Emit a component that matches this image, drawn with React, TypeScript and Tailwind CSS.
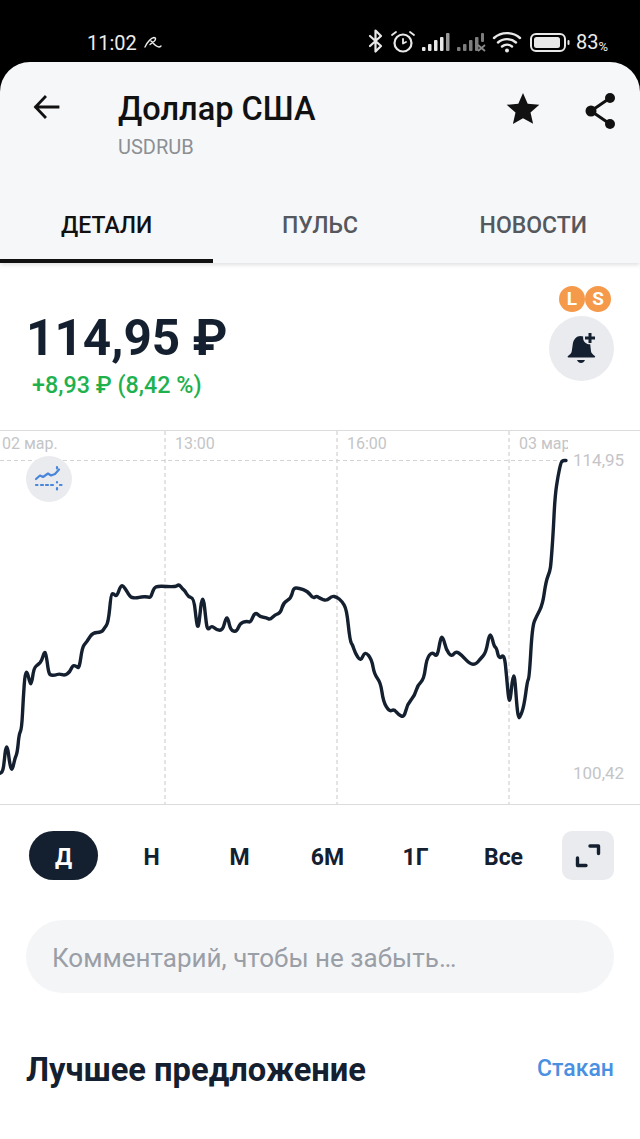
const z5: [number, number][] = [[0,607],[8,605],[13,570],[17,528],[23,528],[28,570],[33,595],[38,595],[45,560],[52,545],[57,490],[65,475],[70,380],[75,305],[82,303],[90,338],[95,338],[102,290],[115,280],[125,270],[133,242],[138,248],[145,300],[150,313],[165,313],[178,308],[195,314],[210,302],[218,283],[228,285],[238,293],[247,228],[258,215],[265,205],[278,185],[305,184],[313,172],[325,155],[333,70],[340,67],[350,78],[362,43],[370,45],[380,60],[392,80],[410,81],[425,77],[445,78],[452,80],[462,50],[475,45],[525,48],[537,40],[547,53],[555,60],[565,78],[582,82],[590,160],[595,170],[600,130],[605,85],[611,85],[616,130],[622,180],[635,163],[650,177],[668,178],[678,140],[684,142],[692,178],[710,183],[720,157],[740,150],[752,155],[765,122],[780,138],[800,140],[810,146],[825,132],[842,125],[850,95],[873,82],[880,52],[895,50],[925,62],[938,82],[950,75]];
const z6: [number, number][] = [[0,82],[20,90],[35,75],[50,78],[65,90],[80,115],[90,210],[98,222],[105,245],[122,272],[135,240],[155,265],[163,310],[182,335],[190,392],[208,422],[222,415],[235,430],[252,440],[262,400],[285,372],[293,342],[312,325],[320,262],[337,242],[352,260],[362,198],[370,200],[378,235],[395,258],[407,240],[425,252],[450,280],[468,280],[480,265],[498,245],[507,192],[514,192],[522,225],[530,232],[537,265],[553,248],[560,320],[566,388],[571,388],[578,315],[584,315],[590,400],[595,440],[600,440],[612,405],[622,330],[628,320],[637,165],[650,135],[668,100],[678,30],[690,0]];
const top: [number, number][] = [[551,562],[553,535],[555,495],[558,475],[561,461],[563,459.500],[566,459.500]];
const raw = [
  ...z5.map(([x, y]) => [x / 3, 570 + y / 3 - 430]),
  ...z6.map(([x, y]) => [320 + x / 3, 570 + y / 3 - 430]),
  ...top.map(([x, y]) => [x, y - 430]),
];
const f = (n: number) => n.toFixed(1);
let line = `M${f(raw[0][0])} ${f(raw[0][1])}`;
for (let i = 1; i < raw.length - 1; i++) {
  const mx = (raw[i][0] + raw[i + 1][0]) / 2;
  const my = (raw[i][1] + raw[i + 1][1]) / 2;
  line += ` Q${f(raw[i][0])} ${f(raw[i][1])} ${f(mx)} ${f(my)}`;
}
line += ` L${f(raw[raw.length - 1][0])} ${f(raw[raw.length - 1][1])}`;

function StatusBar() {
  return (
    <div className="h-[62px] bg-black flex items-end justify-between pl-[87px] pr-[32px] pb-[7px] text-[#ececec]">
      <div className="flex items-center gap-[7px]">
        <span className="text-[20px] leading-[24px]">11:02</span>
        <svg width="18" height="16" viewBox="0 0 18 16" fill="none" stroke="currentColor" strokeWidth="1.400" strokeLinecap="round" strokeLinejoin="round">
          <path d="M1 12C4 6 7 3 10 2.500c2 0 2 2 .5 3.500L6 9.500M7 6c3 3 5 6 8 6 1 0 2-1 2-1" />
        </svg>
      </div>
      <div className="flex items-center">
        <svg width="204" height="26" viewBox="0 0 204 26" fill="none">
          <g stroke="#e8e8e8" strokeWidth="2.200" strokeLinecap="round" strokeLinejoin="round">
            <path d="M4 7l11 10-5.500 5.500V1.500L15 7 4 17" />
            <circle cx="37" cy="14" r="8.500" />
            <path d="M37 10v4.500l3-1.500M26 6l4-3M48 6l-4-3" strokeWidth="1.800" />
          </g>
          <g fill="#e8e8e8">
            <rect x="56" y="18" width="3.500" height="4" rx="1" />
            <rect x="62" y="15" width="3.500" height="7" rx="1" />
            <rect x="68" y="11" width="3.500" height="11" rx="1" />
            <rect x="74" y="8" width="3.500" height="14" rx="1" />
          </g>
          <rect x="80" y="4" width="3.500" height="18" rx="1" fill="#9a9a9a" />
          <g fill="#7d7d7d">
            <rect x="91" y="18" width="3.500" height="4" rx="1" />
            <rect x="97" y="15" width="3.500" height="7" rx="1" />
            <rect x="103" y="11" width="3.500" height="11" rx="1" />
            <rect x="109" y="8" width="3.500" height="14" rx="1" />
            <rect x="115" y="4" width="3" height="9" rx="1" />
          </g>
          <path d="M112 16l7 6M119 16l-7 6" stroke="#8a8a8a" strokeWidth="1.800" />
          <path d="M128 9c7-6.500 19-6.500 26 0M132 13.500c5-4.500 13-4.500 18 0M136 17.500c3-2.500 7-2.500 10 0" stroke="#e8e8e8" strokeWidth="2.400" strokeLinecap="round" />
          <circle cx="141" cy="21.500" r="2" fill="#e8e8e8" />
          <rect x="165" y="5" width="34" height="17" rx="5" stroke="#e8e8e8" strokeWidth="2" />
          <rect x="168" y="8" width="26" height="11" rx="2.500" fill="#e8e8e8" />
          <rect x="201.500" y="11" width="2" height="5" rx="1" fill="#e8e8e8" />
        </svg>
        <span className="text-[20px] leading-[24px] ml-[6px]">83</span>
        <span className="text-[13px] leading-[16px] self-end">%</span>
      </div>
    </div>
  );
}

function Header() {
  return (
    <div className="relative z-10 bg-black">
      <div className="bg-[#f6f7f9] rounded-t-[30px] h-[201px] shadow-[0_2px_4px_rgba(0,0,0,0.12)] flex flex-col">
        <div className="flex h-[126px] pt-[28px]">
          <div className="w-[118px] pl-[31px] pt-[1px]">
            <svg width="32" height="32" viewBox="0 0 32 32" fill="none" stroke="#111" strokeWidth="2.800" strokeLinecap="square">
              <path d="M27 16H5M14 6L4.500 16 14 26" />
            </svg>
          </div>
          <div className="flex-1">
            <div className="text-[32.500px] leading-[38px] font-medium text-[#111]">Доллар США</div>
            <div className="mt-[8px] text-[20px] leading-[22px] text-[#8c8f94]">USDRUB</div>
          </div>
          <div className="flex items-start pr-[23px] pt-[2px] gap-[45px]">
            <svg width="34" height="32" viewBox="0 0 34 32" fill="#111">
              <path d="M17 1l4.700 10.700 11.600 1.100-8.800 7.700 2.600 11.300L17 26.200 6.900 32l2.600-11.400L.7 12.800l11.600-1.100z" />
            </svg>
            <svg width="32" height="38" viewBox="0 0 32 38" fill="none">
              <path d="M25 6L6 19l19 13" stroke="#111" strokeWidth="3" />
              <circle cx="25" cy="6" r="5" fill="#111" /><circle cx="6" cy="19" r="5.500" fill="#111" /><circle cx="25" cy="32" r="5" fill="#111" />
            </svg>
          </div>
        </div>
        <div className="grid grid-cols-3 h-[75px] text-[23px] font-medium text-[#55585d]">
          <div className="flex items-center justify-center border-b-[4px] border-[#111] text-[#111] pt-[5px]">ДЕТАЛИ</div>
          <div className="flex items-center justify-center pt-[1px]">ПУЛЬС</div>
          <div className="flex items-center justify-center pt-[1px]">НОВОСТИ</div>
        </div>
      </div>
    </div>
  );
}

function Quote() {
  return (
    <div className="h-[167px] flex justify-between pl-[26px] pr-[26px]">
      <div className="pt-[47px]">
        <div className="text-[49.500px] leading-[56px] font-bold text-[#14202f]">114,95 ₽</div>
        <div className="mt-[5px] ml-[6px] text-[23.300px] leading-[28px] font-medium text-[#1fb14e]">+8,93 ₽ (8,42 %)</div>
      </div>
      <div className="flex flex-col items-end pt-[23px]">
        <div className="flex mr-[3px] gap-0">
          <span className="w-[26px] h-[26px] rounded-full bg-[#f59a4a] text-white text-[19px] leading-[26px] font-bold text-center">L</span>
          <span className="w-[26px] h-[26px] rounded-full bg-[#f59a4a] text-white text-[19px] leading-[26px] font-bold text-center">S</span>
        </div>
        <div className="mt-[4px] w-[65px] h-[65px] rounded-full bg-[#e9ebee] flex items-center justify-center">
          <svg width="32" height="34" viewBox="0 0 32 34" fill="#14202f">
            <path d="M14.500 4c1 0 1.800.2 2.700.5-.5 2.500.5 5 2.500 6.500 1.300 1 3 1.500 4.500 1.200l.8 7c.2 1.700 1.500 3 3.800 4.800.7.600.4 1.500-.5 1.500H2.500c-.9 0-1.200-.9-.5-1.500C4.300 22.500 5.500 21 5.800 19l1-7C7.500 7.500 10.500 4 14.500 4z" />
            <path d="M11 28h8c-.8 2-2.300 3-4 3s-3.200-1-4-3z" />
            <path d="M24 1v10M19 6h10" stroke="#14202f" strokeWidth="3" />
          </svg>
        </div>
      </div>
    </div>
  );
}

function Chart() {
  const label = "absolute text-[16px] leading-[20px] text-[#c4c5c7] whitespace-nowrap";
  const axis = "absolute text-[17px] leading-[20px] text-[#c4c5c7] whitespace-nowrap";
  return (
    <div className="relative h-[375px] border-y border-[#dcdcdc] overflow-hidden bg-white">
      <svg className="absolute inset-0" width="640" height="373" fill="none">
        <g stroke="#d2d3d5" strokeWidth="1.200" strokeDasharray="4 3">
          <path d="M165 0V373M337 0V373M509 0V373M0 29.500H566" />
        </g>
        <path d={line} stroke="#14202f" strokeWidth="3.400" strokeLinejoin="round" strokeLinecap="round" />
      </svg>
      <div className="absolute left-0 top-0 w-[568px] h-[24px] overflow-hidden">
        <span className={`${label} left-[2px] top-[3px]`}>02 мар.</span>
        <span className={`${label} left-[175px] top-[3px]`}>13:00</span>
        <span className={`${label} left-[347px] top-[3px]`}>16:00</span>
        <span className={`${label} left-[519px] top-[3px]`}>03 мар.</span>
      </div>
      <span className={`${axis} left-[573px] top-[19px]`}>114,95</span>
      <span className={`${axis} left-[573px] top-[332px]`}>100,42</span>
      <div className="absolute left-[26px] top-[25px] w-[46px] h-[46px] rounded-full bg-[#e9ebee] flex items-center justify-center">
        <svg width="30" height="30" viewBox="0 0 30 30" fill="none" stroke="#4a86dc" strokeWidth="2.200" strokeLinecap="round" strokeLinejoin="round">
          <path d="M2 15l4-3.500 3 1.500 5-3.500 3 2 4-1.500 4-4.500" />
          <path d="M2 21h1.500M7 21h2M12 21h2M17 21h2M26 21h1.500M23 18v.5M23 24v1.500M23 3v1.500" />
        </svg>
      </div>
    </div>
  );
}

function Periods() {
  const items = ["Д", "Н", "М", "6М", "1Г", "Все"];
  return (
    <div className="flex items-center h-[49px] mt-[26px] pl-[19px] pr-[26px] justify-between">
      <div className="flex">
        {items.map((t, i) => (
          <div key={t} className="w-[88px] flex justify-center">
            <div className={`h-[49px] w-[69px] rounded-full flex items-center justify-center pt-[5px] pl-[1px] text-[23px] font-bold ${i === 0 ? "bg-[#14202f] text-white" : "text-[#14202f]"}`}>{t}</div>
          </div>
        ))}
      </div>
      <div className="w-[52px] h-[49px] rounded-[10px] bg-[#e9ebee] flex items-center justify-center">
        <svg width="26" height="24" viewBox="0 0 26 24" fill="none" stroke="#14202f" strokeWidth="3.400" strokeLinecap="round" strokeLinejoin="round">
          <path d="M15 2h8.500v7.500M2.500 14v7.500H11" />
        </svg>
      </div>
    </div>
  );
}

export default function App() {
  return (
    <div className="w-[640px] h-[1139px] overflow-hidden bg-white font-['Roboto',sans-serif]">
      <StatusBar />
      <Header />
      <Quote />
      <Chart />
      <Periods />
      <div className="mx-[26px] mt-[40px] h-[73px] rounded-full bg-[#f4f5f7] flex items-center pl-[26px] pt-[3px] text-[26px] text-[#9a9ea6]">Комментарий, чтобы не забыть…</div>
      <div className="mt-[57px] px-[26px] flex items-center justify-between">
        <span className="text-[32.700px] leading-[40px] font-bold text-[#14202f]">Лучшее предложение</span>
        <span className="text-[23px] font-medium text-[#4a90e2] mb-[2px]">Стакан</span>
      </div>
    </div>
  );
}
